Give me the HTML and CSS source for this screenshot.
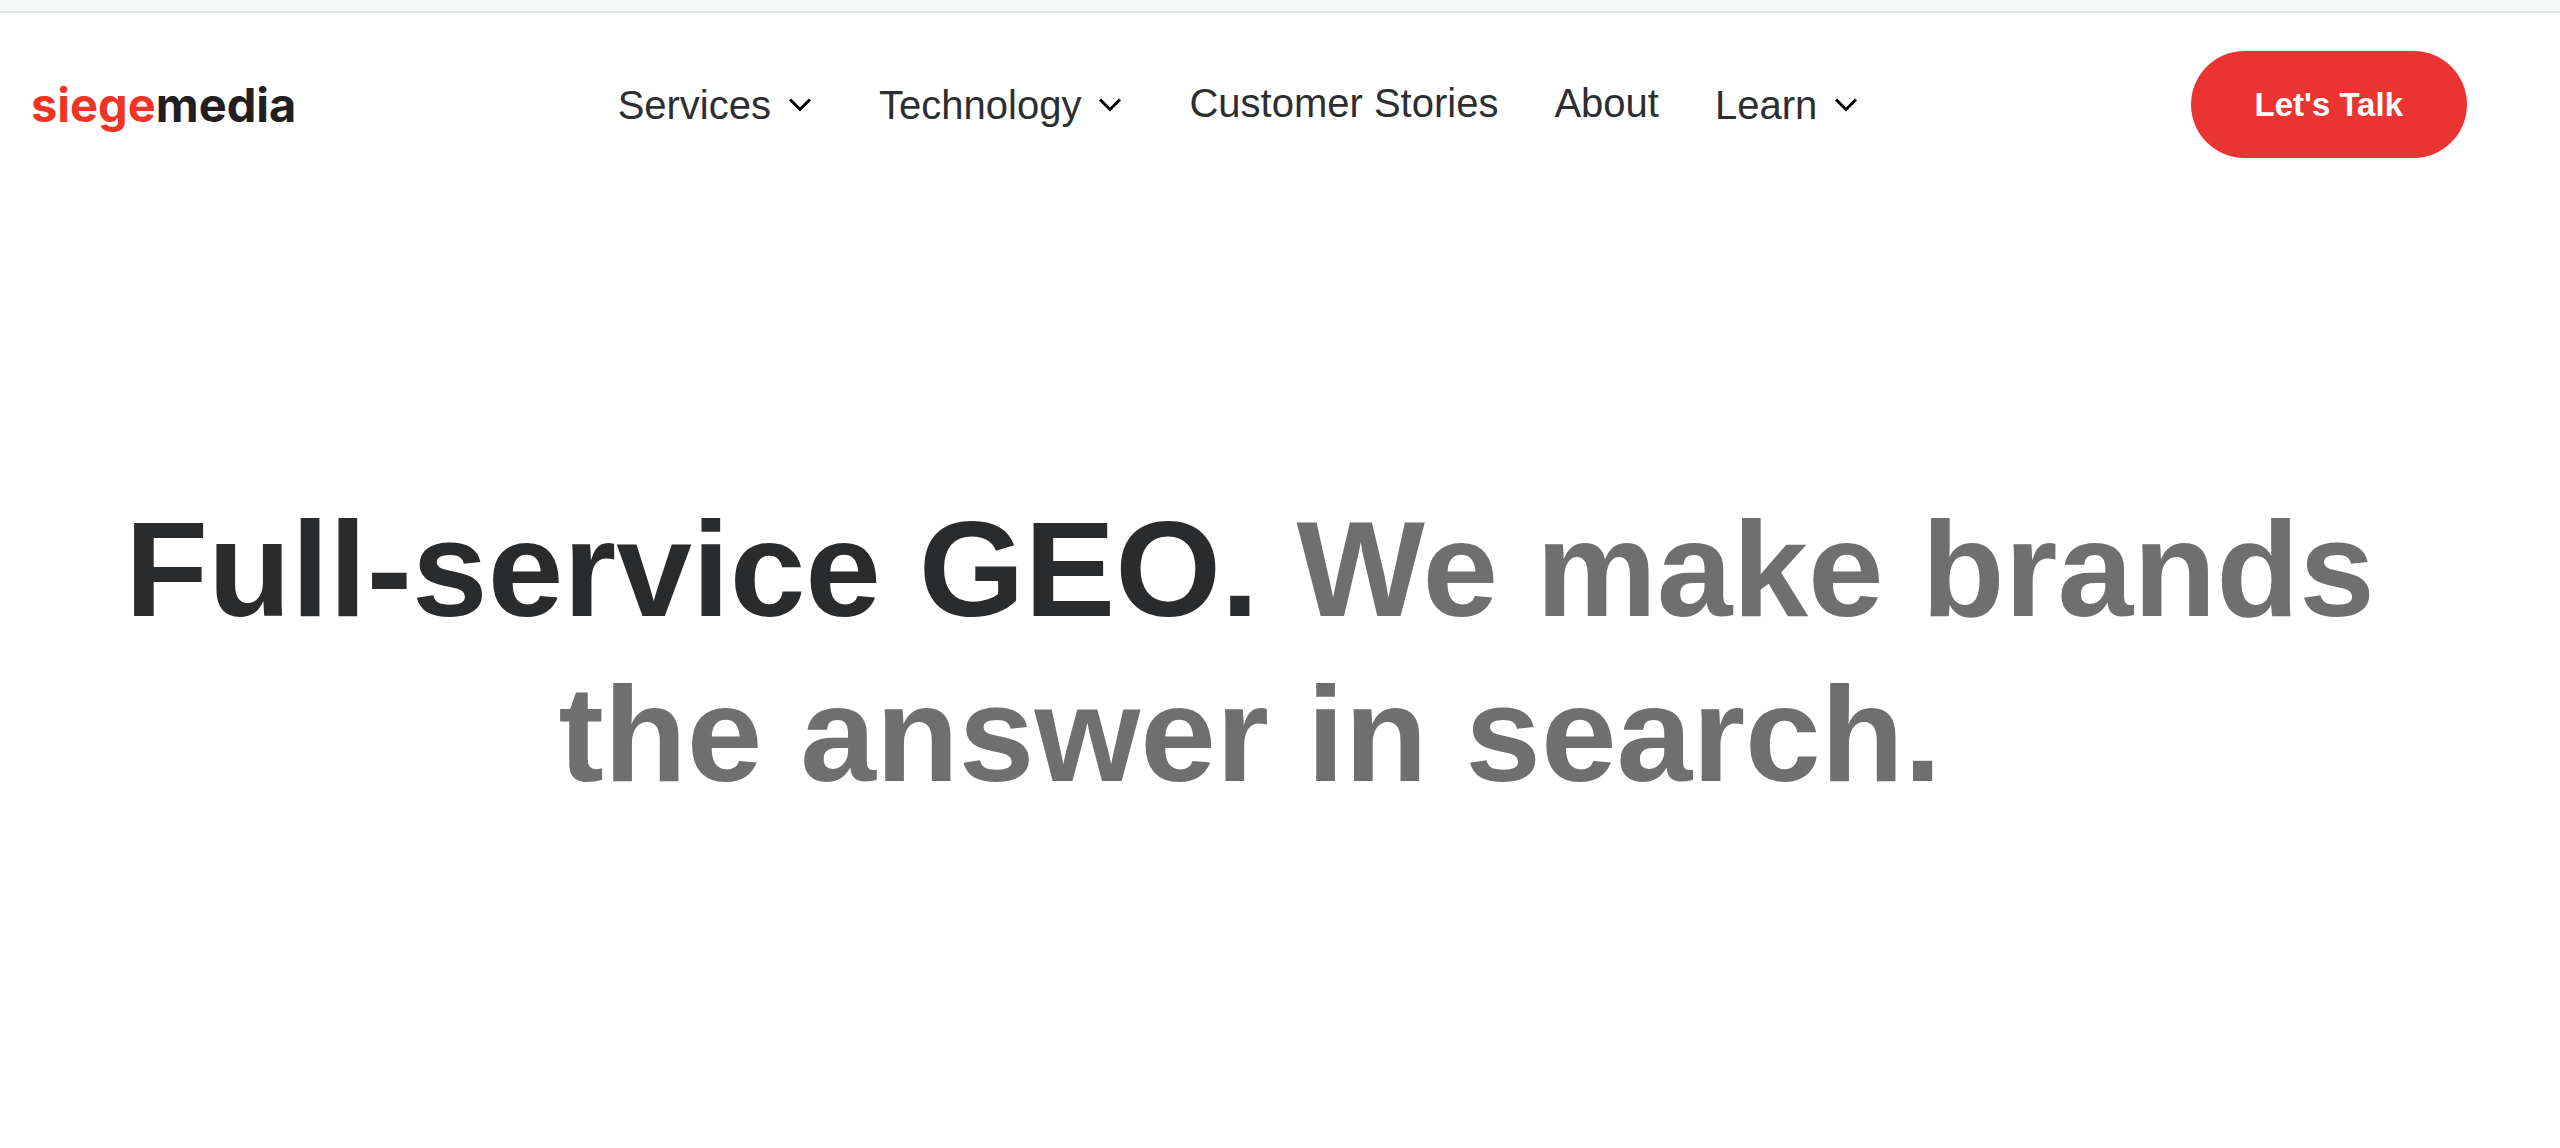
FILE: index.html
```html
<!DOCTYPE html>
<html lang="en">
<head>
<meta charset="utf-8">
<meta name="viewport" content="width=device-width, initial-scale=1">
<title>Siege Media</title>
<link rel="stylesheet" href="styles.css">
</head>
<body>
<div class="top-strip"></div>
<header class="header">
  <a class="logo" href="#"><span class="logo-accent">siege</span>media</a>
  <nav class="nav" aria-label="Main">
    <ul class="nav-list">
      <li><button class="nav-menu" type="button">Services<svg class="chevron" viewBox="0 0 22 14" aria-hidden="true"><path d="M1 1.500L11 11.500L21 1.500"/></svg></button></li>
      <li><button class="nav-menu" type="button">Technology<svg class="chevron" viewBox="0 0 22 14" aria-hidden="true"><path d="M1 1.500L11 11.500L21 1.500"/></svg></button></li>
      <li><a class="nav-link" href="#">Customer Stories</a></li>
      <li><a class="nav-link" href="#">About</a></li>
      <li><button class="nav-menu" type="button">Learn<svg class="chevron" viewBox="0 0 22 14" aria-hidden="true"><path d="M1 1.500L11 11.500L21 1.500"/></svg></button></li>
    </ul>
  </nav>
  <button class="cta" type="button">Let's Talk</button>
</header>
<main class="hero">
  <h1 class="hero-title">Full-service GEO. <span class="hero-muted">We make brands the answer in search.</span></h1>
</main>
</body>
</html>
```
FILE: styles.css
```css
* {
  box-sizing: border-box;
}

body {
  margin: 0;
  background: #fff;
  color: #2a2b2c;
  font-family: "Liberation Sans", Arial, sans-serif;
}

button {
  margin: 0;
  border: 0;
  font-family: inherit;
  cursor: pointer;
}

a {
  color: inherit;
  text-decoration: none;
}

.top-strip {
  height: 13px;
  background: #f5faf9;
  border-bottom: 2px solid #dde6e4;
}

.header {
  display: flex;
  align-items: center;
  justify-content: space-between;
  padding: 38px 93px 0 31px;
}

.logo {
  color: #231f20;
  font: 700 47px/60px Inter, sans-serif;
}

.logo-accent {
  color: #ee3524;
}

.nav-list {
  display: flex;
  align-items: center;
  gap: 56px;
  margin: 0;
  padding: 0;
  list-style: none;
}

.nav-menu,
.nav-link {
  display: flex;
  align-items: center;
  color: #2d2e2f;
  font-size: 40px;
  line-height: 48px;
}

.nav-menu {
  gap: 18px;
  padding: 0 12px 0 0;
  background: none;
}

.nav-link {
  padding-bottom: 4px;
}

.chevron {
  width: 22px;
  height: 14px;
  fill: none;
  stroke: #000;
  stroke-width: 3;
}

.cta {
  padding: 28px 64px;
  border-radius: 54px;
  background: #ea3431;
  color: #fff;
  font-size: 33px;
  font-weight: 700;
  line-height: 51px;
}

.hero {
  padding: 329px 60px 0 0;
}

.hero-title {
  max-width: 2300px;
  margin: 0 auto;
  font-size: 136px;
  font-weight: 700;
  line-height: 165px;
  text-align: center;
}

.hero-muted {
  color: #6f6f6f;
}
```
